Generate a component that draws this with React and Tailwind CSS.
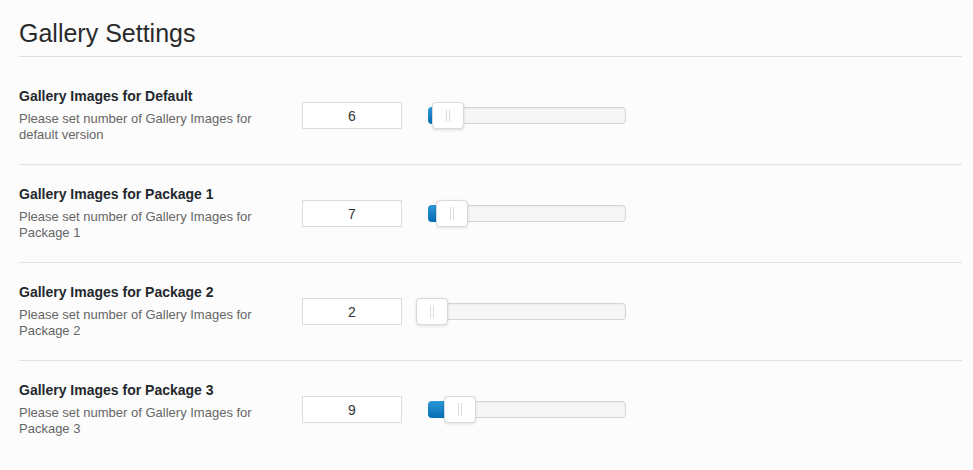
import React, { useState } from 'react';

const settings = [
    { id: 'default', title: 'Gallery Images for Default', desc: 'Please set number of Gallery Images for default version', value: 6 },
    { id: 'p1', title: 'Gallery Images for Package 1', desc: 'Please set number of Gallery Images for Package 1', value: 7 },
    { id: 'p2', title: 'Gallery Images for Package 2', desc: 'Please set number of Gallery Images for Package 2', value: 2 },
    { id: 'p3', title: 'Gallery Images for Package 3', desc: 'Please set number of Gallery Images for Package 3', value: 9 },
];

// 4px per step, min value 1
const STEP = 4;

const Slider = ({ value }) => {
    const pos = (value - 1) * STEP;
    return (
        <div className="relative w-[198px] h-[17px] rounded-[4px] border border-[#d4d4d4] bg-[#f6f6f6] shadow-[inset_0_1px_2px_rgba(0,0,0,0.04)]">
            <div
                className="absolute -left-px -top-px -bottom-px rounded-l-[4px] bg-gradient-to-b from-[#2b97d6] to-[#006fb3]"
                style={{ width: pos + 1 }}
            />
            <div
                className="absolute top-[-6px] w-[32px] h-[27px] rounded-[4px] border border-[#d9d9d9] bg-white shadow-[0_1px_3px_rgba(0,0,0,0.12)] flex items-center justify-center gap-[2px]"
                style={{ left: pos - 17 }}
            >
                <span className="block w-px h-[13px] bg-[#dcdcdc]" />
                <span className="block w-px h-[13px] bg-[#dcdcdc]" />
            </div>
        </div>
    );
};

const SettingRow = ({ item, first, last }) => {
    const [value, setValue] = useState(item.value);
    return (
        <div className={`flex items-center pt-[21px] pb-[21px] ${first ? 'mt-[10px]' : ''} ${last ? '' : 'border-b border-[#e3e3e3]'}`}>
            <div className="w-[283px] shrink-0">
                <div className="text-[14px] leading-[17px] font-bold text-[#23282d]">{item.title}</div>
                <p className="mt-[6px] w-[250px] text-[13px] leading-[16px] text-[#666]">{item.desc}</p>
            </div>
            <input
                type="text"
                value={value}
                onChange={(e) => setValue(e.target.value)}
                className="w-[100px] h-[27px] border border-[#dcdcdc] bg-white text-center text-[14px] text-[#333] outline-none"
            />
            <div className="ml-[26px]">
                <Slider value={Number(value) || 1} />
            </div>
        </div>
    );
};

export default function App() {
    return (
        <div className="min-h-[470px] bg-[#fcfcfc] pl-[19px] pr-[11px] font-['Liberation_Sans',Arial,sans-serif]">
            <h2 className="pt-[18px] pb-[8px] text-[25px] leading-[30px] font-normal text-[#2a2a2a] border-b border-[#e0e0e0]">
                Gallery Settings
            </h2>
            {settings.map((item, i) => (
                <SettingRow key={item.id} item={item} first={i === 0} last={i === settings.length - 1} />
            ))}
        </div>
    );
}
